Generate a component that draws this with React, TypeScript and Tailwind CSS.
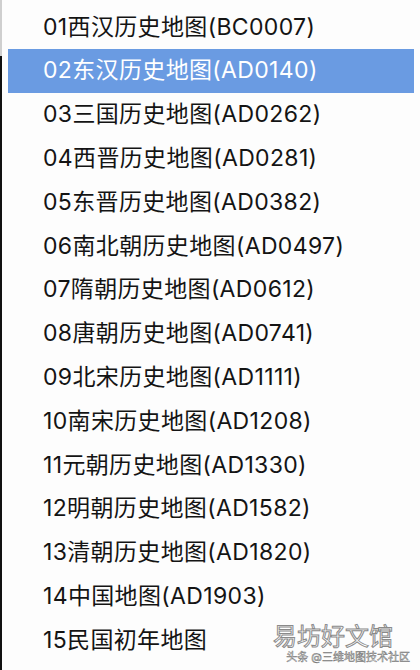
import React from 'react';

const maps = [
  '01西汉历史地图(BC0007)',
  '02东汉历史地图(AD0140)',
  '03三国历史地图(AD0262)',
  '04西晋历史地图(AD0281)',
  '05东晋历史地图(AD0382)',
  '06南北朝历史地图(AD0497)',
  '07隋朝历史地图(AD0612)',
  '08唐朝历史地图(AD0741)',
  '09北宋历史地图(AD1111)',
  '10南宋历史地图(AD1208)',
  '11元朝历史地图(AD1330)',
  '12明朝历史地图(AD1582)',
  '13清朝历史地图(AD1820)',
  '14中国地图(AD1903)',
  '15民国初年地图',
];

const selected = 1;

export default function App() {
  return (
    <div
      className="relative flex h-[670px] w-[420px] overflow-hidden bg-[#fdfdfd]"
      style={{ fontFamily: 'Inter, "Noto Sans CJK SC", sans-serif' }}
    >
      {/* left window edge */}
      <div className="flex w-[2px] flex-col">
        <div className="h-[56px] bg-[#cfcfcf]" />
        <div className="flex-1 bg-[#111]" />
      </div>

      <ul className="flex flex-1 flex-col pt-[5px] pl-[6px] pr-[6px]">
        {maps.map((m, i) => (
          <li
            key={m}
            className={
              i === selected
                ? 'flex h-[43.8px] items-center bg-[#6a9be2] pl-[35px] text-[23px] tracking-[0.35px] text-white'
                : 'flex h-[43.8px] items-center pl-[35px] text-[23px] tracking-[0.35px] text-[#141414]'
            }
          >
            {m}
          </li>
        ))}
      </ul>

      {/* watermark */}
      <div className="absolute right-[10px] bottom-[7px] flex flex-col items-end">
        <span className="mr-[17px] text-[24px] leading-none text-white [-webkit-text-stroke:1px_#8a8a8a]">
          易坊好文馆
        </span>
        <span className="mt-[3px] text-[11px] leading-none text-[#f4f4f4] [-webkit-text-stroke:0.5px_#777]">
          头条 @三维地图技术社区
        </span>
      </div>
    </div>
  );
}
